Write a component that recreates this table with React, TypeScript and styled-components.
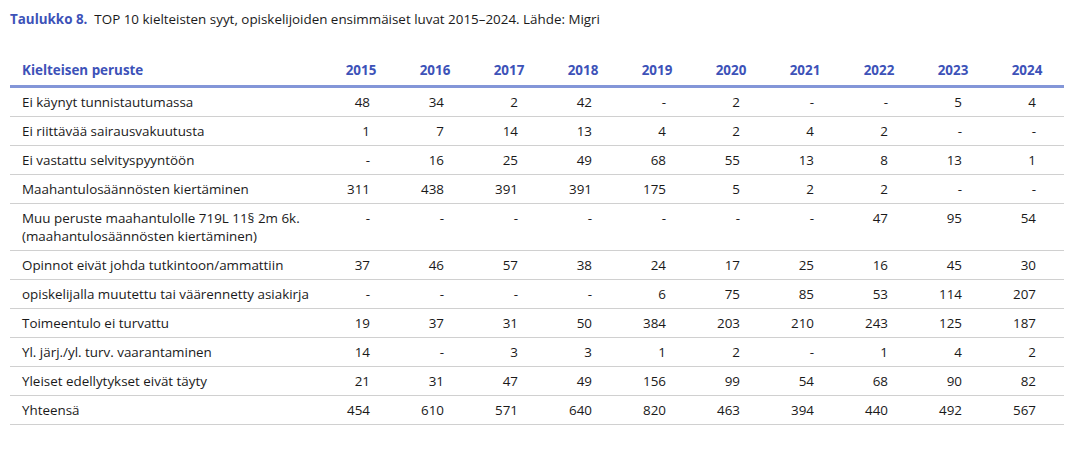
import styled, { createGlobalStyle } from "styled-components"

const GlobalStyle = createGlobalStyle`
  html, body {
    margin: 0;
    padding: 0;
    background: #fff;
  }
  body {
    font-family: "Open Sans", "Noto Sans", sans-serif;
    color: #1a1a1a;
  }
`

const years = [2015, 2016, 2017, 2018, 2019, 2020, 2021, 2022, 2023, 2024]

type Row = { label: string[]; values: string[] }

const rows: Row[] = [
  { label: ["Ei käynyt tunnistautumassa"], values: ["48", "34", "2", "42", "-", "2", "-", "-", "5", "4"] },
  { label: ["Ei riittävää sairausvakuutusta"], values: ["1", "7", "14", "13", "4", "2", "4", "2", "-", "-"] },
  { label: ["Ei vastattu selvityspyyntöön"], values: ["-", "16", "25", "49", "68", "55", "13", "8", "13", "1"] },
  { label: ["Maahantulosäännösten kiertäminen"], values: ["311", "438", "391", "391", "175", "5", "2", "2", "-", "-"] },
  {
    label: ["Muu peruste maahantulolle 719L 11§ 2m 6k.", "(maahantulosäännösten kiertäminen)"],
    values: ["-", "-", "-", "-", "-", "-", "-", "47", "95", "54"],
  },
  { label: ["Opinnot eivät johda tutkintoon/ammattiin"], values: ["37", "46", "57", "38", "24", "17", "25", "16", "45", "30"] },
  { label: ["opiskelijalla muutettu tai väärennetty asiakirja"], values: ["-", "-", "-", "-", "6", "75", "85", "53", "114", "207"] },
  { label: ["Toimeentulo ei turvattu"], values: ["19", "37", "31", "50", "384", "203", "210", "243", "125", "187"] },
  { label: ["Yl. järj./yl. turv. vaarantaminen"], values: ["14", "-", "3", "3", "1", "2", "-", "1", "4", "2"] },
  { label: ["Yleiset edellytykset eivät täyty"], values: ["21", "31", "47", "49", "156", "99", "54", "68", "90", "82"] },
  { label: ["Yhteensä"], values: ["454", "610", "571", "640", "820", "463", "394", "440", "492", "567"] },
]

const Page = styled.div`
  padding: 9px 10px 0 10px;
`

const Caption = styled.div`
  font-size: 13.4px;
  line-height: 20px;
  white-space: pre;
`

const CaptionLabel = styled.span`
  font-weight: 700;
  color: #3d52b8;
`

const Table = styled.div`
  margin-top: 25px;
  width: 1054px;
`

const Line = styled.div<{ $head?: boolean }>`
  display: grid;
  grid-template-columns: 314px repeat(10, 74px);
  align-items: start;
  border-bottom: ${(p) => (p.$head ? "3px solid #8396d8" : "1px solid #d0d0d0")};
  padding: ${(p) => (p.$head ? "7px 0 6px" : "5px 0")};
  font-size: 13.4px;
  line-height: 18px;
`

const HeadLabel = styled.div`
  padding-left: 12px;
  font-weight: 700;
  color: #3d52b8;
`

const HeadYear = styled.div`
  text-align: center;
  font-weight: 700;
  color: #3d52b8;
`

const Label = styled.div`
  padding-left: 12px;
`

const Value = styled.div`
  text-align: right;
  padding-right: 28px;
`

export default function App() {
  return (
    <Page>
      <GlobalStyle />
      <Caption>
        <CaptionLabel>Taulukko 8.</CaptionLabel>
        {"  TOP 10 kielteisten syyt, opiskelijoiden ensimmäiset luvat 2015–2024. Lähde: Migri"}
      </Caption>
      <Table>
        <Line $head>
          <HeadLabel>Kielteisen peruste</HeadLabel>
          {years.map((y) => (
            <HeadYear key={y}>{y}</HeadYear>
          ))}
        </Line>
        {rows.map((r) => (
          <Line key={r.label[0]}>
            <Label>
              {r.label.map((l) => (
                <div key={l}>{l}</div>
              ))}
            </Label>
            {r.values.map((v, i) => (
              <Value key={i}>{v}</Value>
            ))}
          </Line>
        ))}
      </Table>
    </Page>
  )
}
